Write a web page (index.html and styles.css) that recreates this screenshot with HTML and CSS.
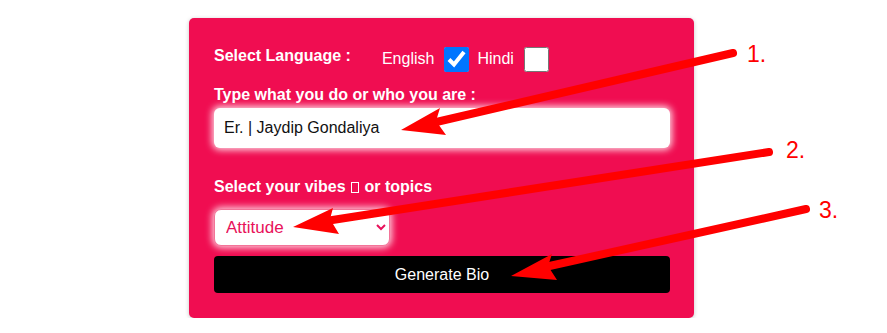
FILE: index.html
```html
<!DOCTYPE html>
<html lang="en">
<head>
<meta charset="utf-8">
<title>Bio Generator</title>
<link rel="stylesheet" href="styles.css">
</head>
<body>
<div class="page">
  <form class="card">
    <div class="lang-row">
      <span class="label lang-label">Select Language :</span>
      <span class="opt">English</span>
      <input class="check" type="checkbox" checked>
      <span class="opt">Hindi</span>
      <input class="check" type="checkbox">
    </div>
    <label class="label type-label">Type what you do or who you are :</label>
    <input class="text-input" type="text" value="Er. | Jaydip Gondaliya">
    <label class="label vibes-label">Select your vibes <span class="tofu"></span> or topics</label>
    <select class="vibes">
      <option>Attitude</option>
    </select>
    <button class="generate" type="button">Generate Bio</button>
  </form>
</div>
<svg class="annot" width="887" height="333" viewBox="0 0 887 333">
  <g stroke="#ff0000" stroke-width="8" stroke-linecap="round" fill="none">
    <line x1="733" y1="53" x2="432" y2="123"/>
    <line x1="769" y1="152" x2="326" y2="221"/>
    <line x1="806" y1="209" x2="545" y2="267"/>
  </g>
  <g fill="#ff0000">
    <polygon points="401,130 440,108 436,121 446,135"/>
    <polygon points="293,227 333,208 330,219 339,234"/>
    <polygon points="511,276 552,254 548,266 557,280"/>
  </g>
  <g fill="#ff0000" font-family="'Liberation Sans', Arial, sans-serif" font-size="23">
    <text x="747" y="62">1.</text>
    <text x="786" y="158">2.</text>
    <text x="819" y="218">3.</text>
  </g>
</svg>
</body>
</html>
```

FILE: styles.css
```css
html, body {
  margin: 0;
  padding: 0;
  background: #ffffff;
  font-family: "Liberation Sans", Arial, sans-serif;
}

.page {
  display: flex;
  justify-content: center;
  padding: 18px 4px 0 0;
}

.card {
  width: 505px;
  box-sizing: border-box;
  background: #f00d51;
  border-radius: 5px;
  box-shadow: 0 1px 4px rgba(0, 0, 0, 0.22);
  padding: 29px 24px 25px 25px;
  display: flex;
  flex-direction: column;
  align-items: flex-start;
}

.label {
  color: #ffffff;
  font-weight: bold;
  font-size: 16px;
  line-height: 18px;
}

.lang-row {
  display: flex;
  align-items: flex-start;
  height: 25px;
}

.lang-label {
  margin-top: 0;
  margin-right: 31px;
}

.opt {
  color: #ffffff;
  font-size: 16px;
  line-height: 18px;
  margin-top: 3px;
}

.check {
  width: 25px;
  height: 25px;
  margin: 0 8px 0 10px;
  accent-color: #0075ff;
}

.type-label {
  margin-top: 14px;
}

.text-input {
  margin-top: 4px;
  width: 456px;
  height: 40px;
  box-sizing: border-box;
  border: none;
  border-radius: 6px;
  background: #ffffff;
  padding: 0 10px;
  font-family: "Liberation Sans", Arial, sans-serif;
  font-size: 16px;
  color: #111111;
  box-shadow: 0 0 7px 2px rgba(255, 255, 255, 0.85);
  outline: none;
}

.vibes-label {
  margin-top: 30px;
}

.tofu {
  display: inline-block;
  width: 6px;
  height: 9px;
  border: 1.5px solid #ffffff;
  vertical-align: -1px;
  margin: 0 1px;
}

.vibes {
  margin-top: 13px;
  width: 176px;
  height: 37px;
  box-sizing: border-box;
  border: 1px solid #f37499;
  border-radius: 7px;
  background: #ffffff;
  color: #e8115a;
  font-family: "Liberation Sans", Arial, sans-serif;
  font-size: 17px;
  padding: 0 4px 0 7px;
  box-shadow: 0 0 7px 2px rgba(255, 255, 255, 0.8);
  outline: none;
}

.generate {
  margin-top: 10px;
  width: 456px;
  height: 37px;
  border: none;
  border-radius: 4px;
  background: #000000;
  color: #ffffff;
  font-family: "Liberation Sans", Arial, sans-serif;
  font-size: 16px;
  cursor: pointer;
}

.annot {
  position: absolute;
  left: 0;
  top: 0;
  pointer-events: none;
}
```
